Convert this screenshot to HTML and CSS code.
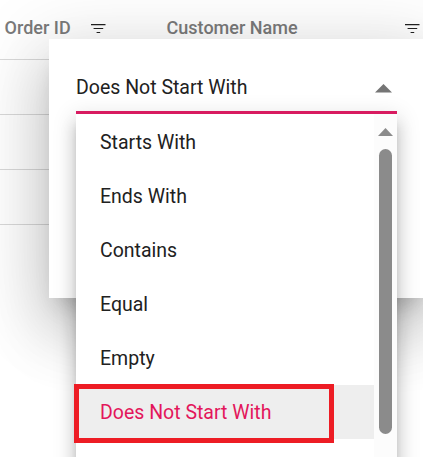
FILE: index.html
```html
<!DOCTYPE html>
<html lang="en">
<head>
<meta charset="utf-8">
<title>Orders</title>
<link rel="stylesheet" href="styles.css">
</head>
<body>
<div class="screen">
  <div class="grid">
    <div class="grid-header">
      <span class="order">Order ID</span>
      <svg class="filter" width="15" height="10" viewBox="0 0 15 10"><path d="M0 .9h14.5v1.3H0zM2.6 4.9h9.6v1.2H2.6zM5.6 8.9h3.6v1.1H5.6z"/></svg>
      <span class="customer">Customer Name</span>
      <svg class="filter" width="15" height="10" viewBox="0 0 15 10"><path d="M0 .9h14.5v1.3H0zM2.6 4.9h9.6v1.2H2.6zM5.6 8.9h3.6v1.1H5.6z"/></svg>
    </div>
    <div class="row"></div>
    <div class="row"></div>
    <div class="row"></div>
  </div>
  <div class="dialog">
    <div class="select">
      <span class="value">Does Not Start With</span>
      <svg class="caret" width="17" height="9" viewBox="0 0 17 9"><path d="M8.5 0 17 8.5H0z"/></svg>
    </div>
    <div class="popup">
      <ul class="options">
        <li>Starts With</li>
        <li>Ends With</li>
        <li>Contains</li>
        <li>Equal</li>
        <li>Empty</li>
        <li class="active">Does Not Start With</li>
      </ul>
      <div class="scrollbar">
        <svg width="15" height="8" viewBox="0 0 15 8"><path d="M7.5 0 15 8H0z"/></svg>
        <div class="thumb"></div>
      </div>
      <div class="highlight"></div>
    </div>
  </div>
</div>
</body>
</html>
```
FILE: styles.css
```css
* { box-sizing: border-box; }
body {
  margin: 0;
  background: #fff;
  font-family: Roboto, "Liberation Sans", sans-serif;
  overflow: hidden;
}
.screen {
  position: relative;
  width: 423px;
  height: 457px;
  overflow: hidden;
}
.grid-header {
  display: flex;
  height: 60px;
  padding-left: 4.6px;
  border-bottom: 1px solid #d9d9d9;
  font-size: 18px;
  font-weight: 500;
  line-height: 56px;
  color: #7a7a7a;
  white-space: nowrap;
}
.order { width: 86px; }
.filter { margin-top: 23px; fill: #222; flex: none; }
.customer { width: 238px; margin-left: 61px; flex: none; }
.row { height: 55px; border-bottom: 1px solid #d9d9d9; }
.dialog {
  position: absolute;
  left: 49px;
  top: 39px;
  width: 380px;
  height: 259px;
  padding: 27px 0 0 27px;
  background: #fff;
  box-shadow: 0 16px 22px -10px rgba(0,0,0,.2), 0 36px 57px 4px rgba(0,0,0,.14), 0 13px 69px 12px rgba(0,0,0,.12);
}
.select {
  position: relative;
  z-index: 1;
  display: flex;
  justify-content: space-between;
  width: 321px;
  height: 48px;
  padding-right: 5.5px;
  border-bottom: 3px solid #d81b60;
  font-size: 19.5px;
  line-height: 44px;
  color: #212121;
}
.caret { margin-top: 18px; fill: #757575; }
.popup {
  position: absolute;
  left: 27px;
  top: 75px;
  display: flex;
  width: 321px;
  height: 450px;
  background: #fff;
  box-shadow: 0 8px 8px -4px rgba(0,0,0,.2), 0 12px 15px 1px rgba(0,0,0,.14), 0 4px 21px 3px rgba(0,0,0,.12);
}
.options {
  flex: 1;
  margin: 0;
  padding: 1px 0 0;
  list-style: none;
  font-size: 19.5px;
  line-height: 56px;
  color: #212121;
}
.options li { height: 54px; padding-left: 24px; }
.options .active { color: #e3165b; background: #eee; }
.scrollbar {
  width: 23px;
  padding: 14px 5px 0 4px;
  background: #fcfcfc;
}
.scrollbar svg { display: block; fill: #8b8b8b; }
.thumb {
  width: 13px;
  height: 285px;
  margin: 13px 0 0 1px;
  border-radius: 7px;
  background: #8b8b8b;
}
.highlight {
  position: absolute;
  left: -2px;
  top: 270px;
  width: 260px;
  height: 59px;
  border: 5px solid #ed1c24;
}
```
